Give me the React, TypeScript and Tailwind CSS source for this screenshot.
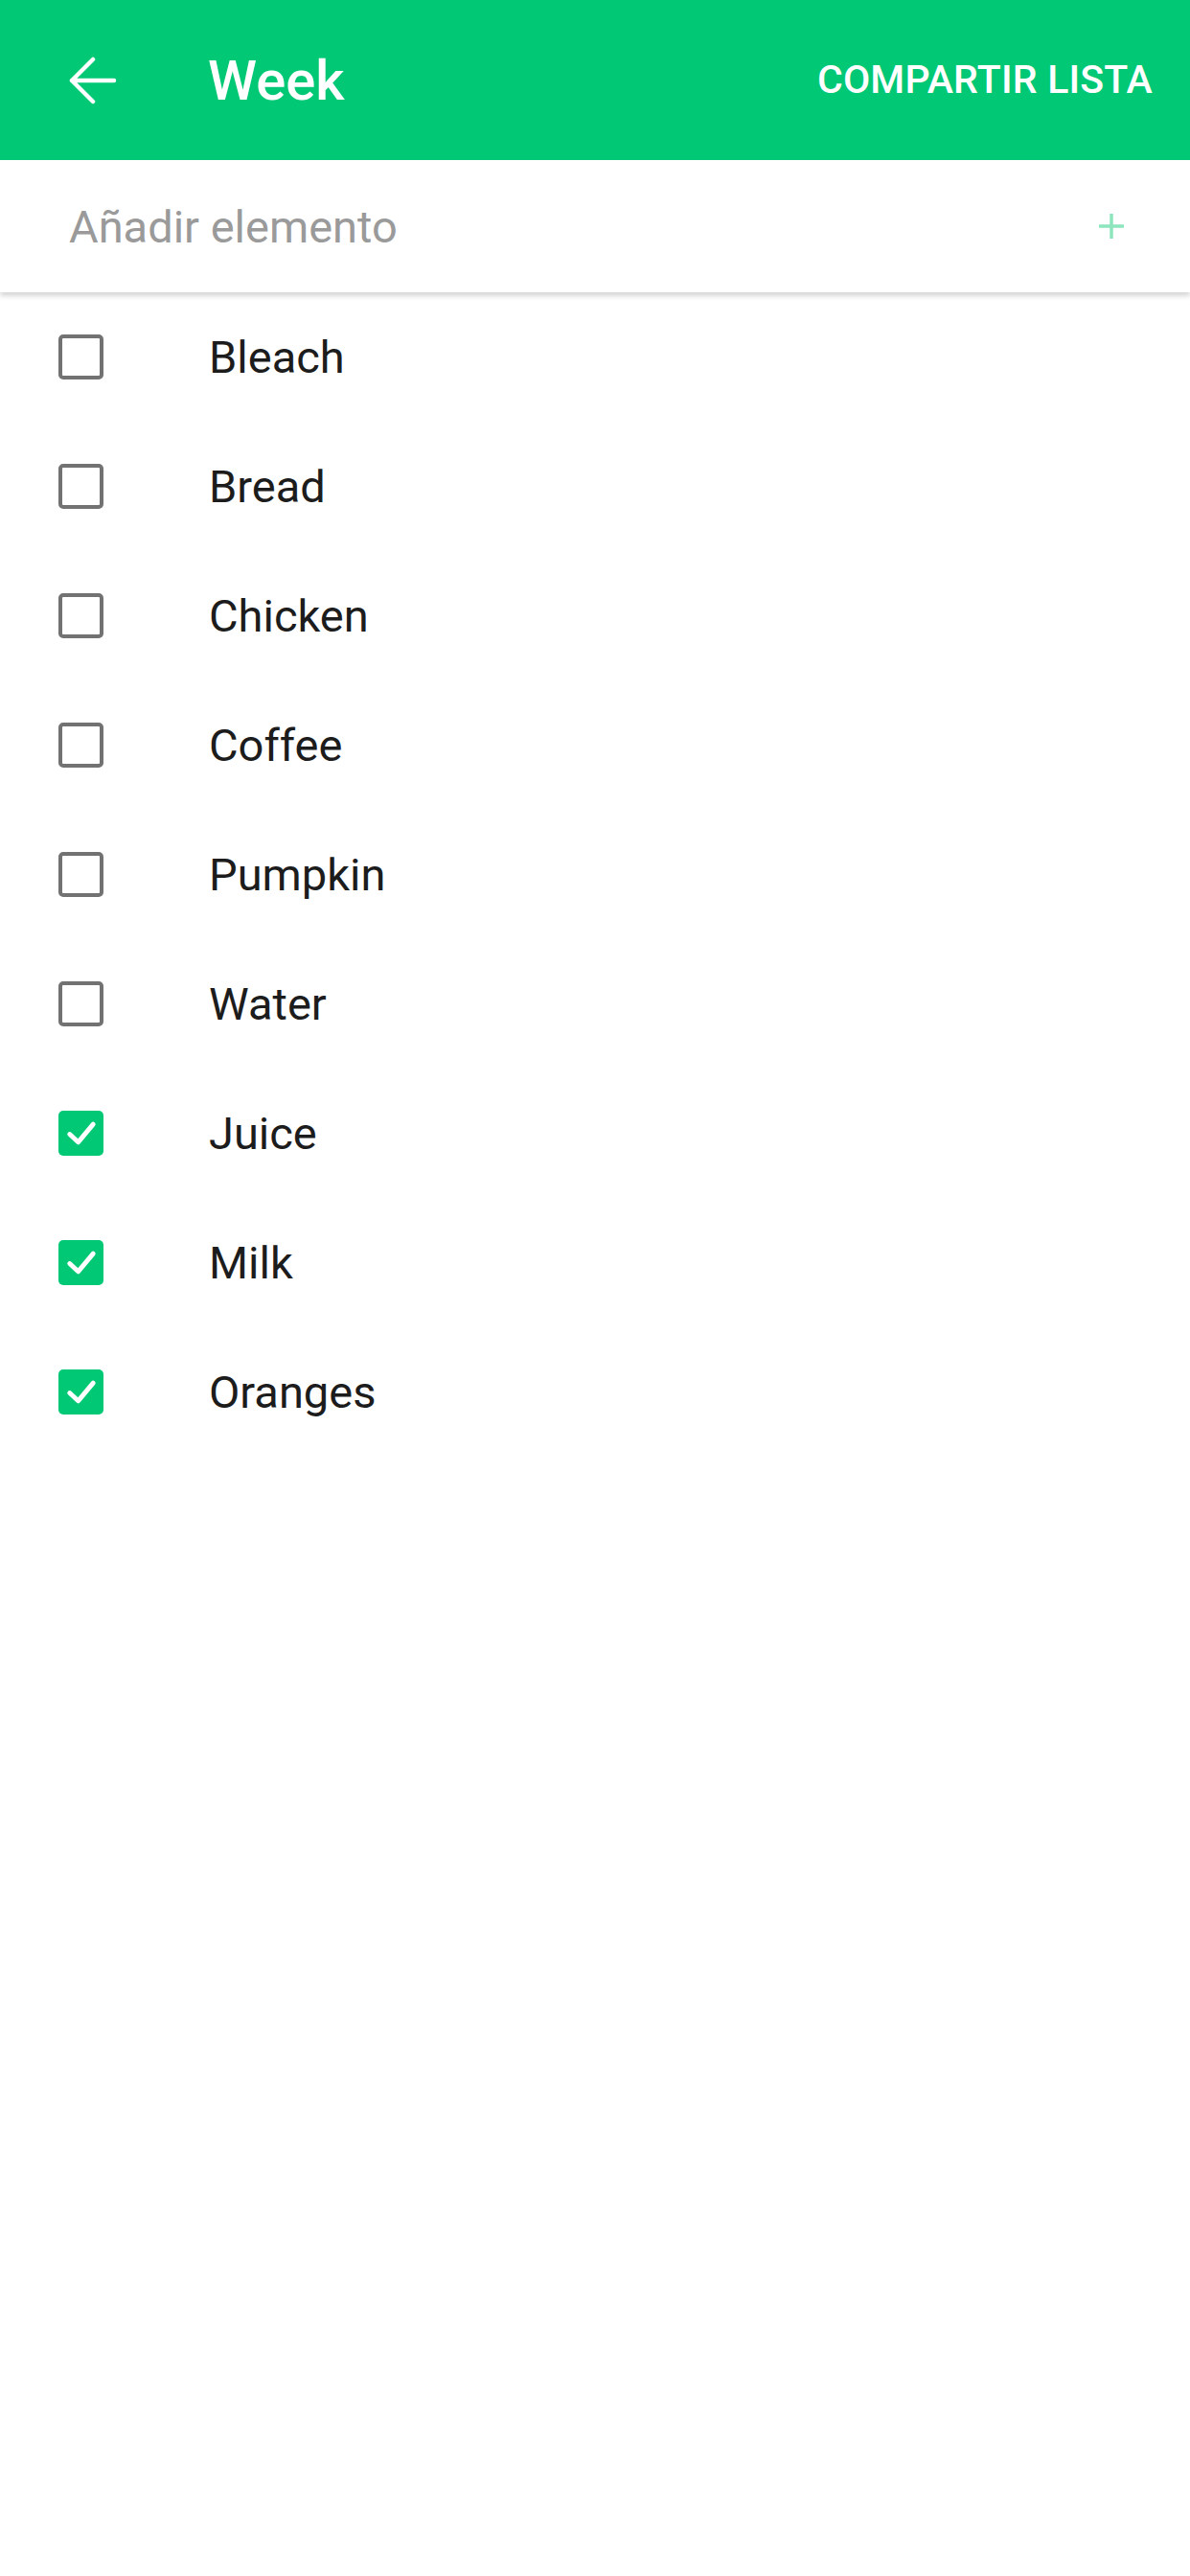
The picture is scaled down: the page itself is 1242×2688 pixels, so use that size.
import React from "react";

const items: { name: string; checked: boolean }[] = [
  { name: "Bleach", checked: false },
  { name: "Bread", checked: false },
  { name: "Chicken", checked: false },
  { name: "Coffee", checked: false },
  { name: "Pumpkin", checked: false },
  { name: "Water", checked: false },
  { name: "Juice", checked: true },
  { name: "Milk", checked: true },
  { name: "Oranges", checked: true },
];

function Box({ checked }: { checked: boolean }) {
  if (checked) {
    return (
      <div className="w-[47px] h-[47px] rounded-[5px] bg-[#00C875] flex items-center justify-center">
        <svg width="47" height="47" viewBox="0 0 48 48" fill="none">
          <polyline
            points="12,25 21,33.5 37,14.5"
            stroke="white"
            strokeWidth="5"
            strokeLinecap="round"
            strokeLinejoin="round"
          />
        </svg>
      </div>
    );
  }
  return <div className="w-[47px] h-[47px] rounded-[5px] border-[4px] border-[#727272] bg-white" />;
}

export default function App() {
  return (
    <div className="w-[1242px] min-h-[2688px] bg-white" style={{ fontFamily: "Roboto, 'Noto Sans', sans-serif" }}>
      <header className="h-[167px] bg-[#00C875] flex items-center pl-[72px] pr-[39px]">
        <svg width="50" height="50" viewBox="0 0 50 50" fill="none" className="shrink-0">
          <path
            d="M3 25 H47 M25 3 L3 25 L25 47"
            stroke="white"
            strokeWidth="4.5"
            strokeLinecap="round"
            strokeLinejoin="round"
          />
        </svg>
        <h1 className="ml-[95px] text-[58px] leading-none font-medium text-white">Week</h1>
        <div className="ml-auto text-[41px] leading-none font-medium text-white tracking-[0.2px]">
          COMPARTIR LISTA
        </div>
      </header>
      <div className="relative z-10 h-[138px] bg-white flex items-center pl-[72px] pr-[68px] shadow-[0_4px_5px_rgba(0,0,0,0.16)]">
        <div className="text-[47px] leading-none text-[#9a9a9a]">Añadir elemento</div>
        <svg width="28" height="28" viewBox="0 0 28 28" className="ml-auto" fill="none">
          <path d="M14 1 V27 M1 14 H27" stroke="#8DE5BE" strokeWidth="3.5" />
        </svg>
      </div>
      <ul>
        {items.map((it) => (
          <li key={it.name} className="h-[135px] flex items-center pl-[61px]">
            <Box checked={it.checked} />
            <span className="ml-[110px] text-[47px] leading-none text-[#1c1c1c]">{it.name}</span>
          </li>
        ))}
      </ul>
    </div>
  );
}
